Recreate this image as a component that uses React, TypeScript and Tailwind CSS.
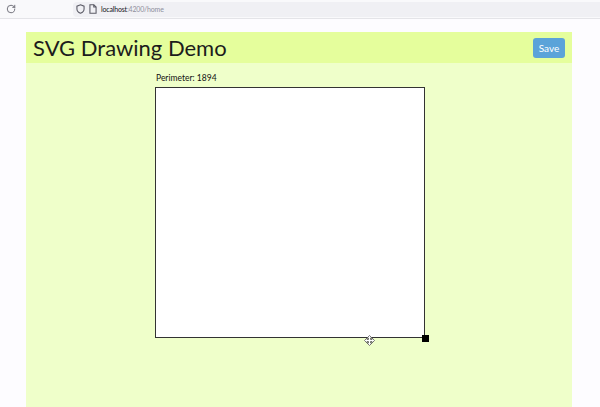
import { RotateCw } from 'lucide-react'

export default function App() {
  return (
    <div className="w-[600px] h-[407px] overflow-hidden bg-[#fdfcff] flex flex-col" style={{ fontFamily: 'Lato, "Open Sans", sans-serif' }}>
      {/* Browser toolbar */}
      <div className="h-[19px] flex items-center bg-[#f9f9fb] border-b border-[#e4e4e8] shrink-0">
        <div className="w-[73px] flex items-center pl-[6px]">
          <RotateCw className="w-[10px] h-[10px] text-[#5b5b66]" strokeWidth={2} />
        </div>
        <div className="flex-1 h-[15px] bg-[#f0f0f4] rounded-l flex items-center gap-[4px] pl-[3px]">
          <svg width="9" height="10" viewBox="0 0 12 14" fill="none" stroke="#5b5b66" strokeWidth="1.5">
            <path d="M6 1 L11 3 V7 C11 10 8.5 12 6 13 C3.5 12 1 10 1 7 V3 Z" />
          </svg>
          <svg width="8" height="10" viewBox="0 0 10 13" fill="none" stroke="#5b5b66" strokeWidth="1.4">
            <path d="M1 1 H6 L9 4 V12 H1 Z" />
            <path d="M6 1 V4 H9" />
          </svg>
          <span className="text-[7px] tracking-tight">
            <span className="text-[#15141a]">localhost</span>
            <span className="text-[#8f8f9d]">:4200/home</span>
          </span>
        </div>
      </div>

      {/* Page */}
      <div className="flex-1 pt-[13px] px-[26px] pr-[28px]">
        <div className="h-full bg-[#efffca] flex flex-col">
          <div className="h-[31px] bg-[#e5fe9c] flex items-center justify-between pl-[7px] pr-[7px]">
            <h1 className="text-[22px] leading-none text-[#1c1c1c] mt-[1px]">
              SVG Drawing Demo
            </h1>
            <button className="w-[32px] h-[20px] bg-[#5ba3d9] rounded-[3px] text-white text-[10px] leading-none">
              Save
            </button>
          </div>
          <div className="pl-[129px] pt-[11px]">
            <div className="text-[8.5px] leading-none text-[#111] mb-[4px] pl-[1px]">Perimeter: 1894</div>
            <div className="relative w-[270px] h-[251px] bg-white border border-[#333]">
              <div className="absolute right-[-5px] bottom-[-5px] w-[7px] h-[7px] bg-black" />
              <svg className="absolute left-[208px] bottom-[-9px]" width="11" height="11" viewBox="0 0 11 11">
                <path d="M5.5 0.5 L8 3 H6.5 V4.5 H8 V3 L10.5 5.5 L8 8 V6.5 H6.5 V8 H8 L5.5 10.5 L3 8 H4.5 V6.5 H3 V8 L0.5 5.5 L3 3 V4.5 H4.5 V3 H3 Z" fill="white" stroke="#555" strokeWidth="0.8" />
              </svg>
            </div>
          </div>
        </div>
      </div>
    </div>
  )
}
